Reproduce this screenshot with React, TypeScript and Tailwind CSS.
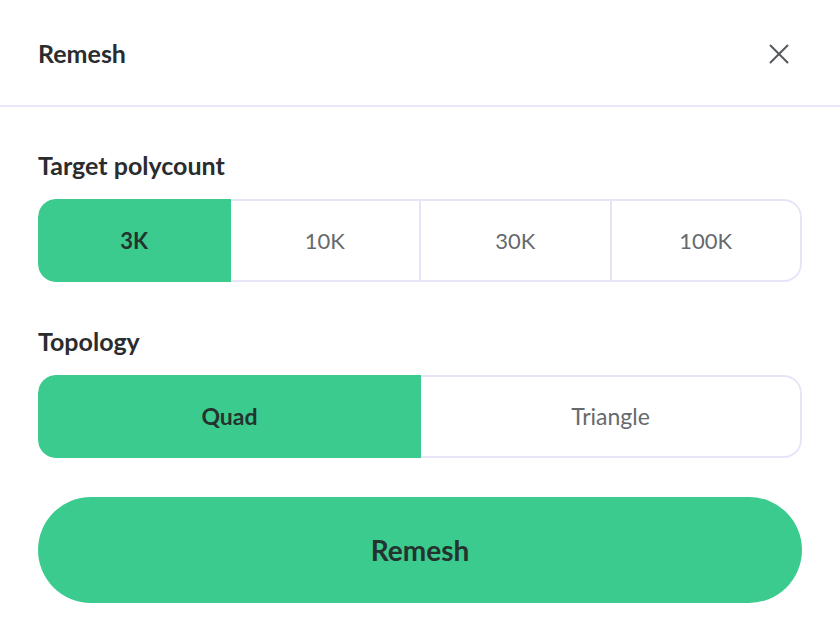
import { X } from 'lucide-react';

const polycounts = ['3K', '10K', '30K', '100K'];
const topologies = ['Quad', 'Triangle'];

function Segmented({ options, selected, size }: { options: string[]; selected: string; size: string }) {
  return (
    <div className="flex h-[83px] rounded-[18px] overflow-hidden">
      {options.map((o, i) => (
        <button
          key={o}
          className={
            'flex-1 flex items-center justify-center border-y-2 border-r-2 ' +
            size +
            (i === 0 ? ' border-l-2 rounded-l-[18px]' : '') +
            (i === options.length - 1 ? ' rounded-r-[18px]' : '') +
            (o === selected
              ? ' bg-[#3ccb8e] border-[#3ccb8e] text-[#24332e] font-bold'
              : ' bg-white border-[#e6e4f6] text-[#666a6c] font-normal')
          }
        >
          {o}
        </button>
      ))}
    </div>
  );
}

export default function App() {
  return (
    <div className="w-[840px] h-[634px] bg-white overflow-hidden rounded-[28px]" style={{ fontFamily: 'Lato, "Noto Sans", sans-serif' }}>
      <div className="h-[107px] flex items-center justify-between pl-[38px] pr-[44px] border-b-2 border-[#e8e6f8]">
        <h1 className="text-[25px] font-bold text-[#2a2c2e] leading-[30px]">Remesh</h1>
        <X size={34} strokeWidth={1.4} className="text-[#555a5e] mt-[2px]" />
      </div>
      <div className="px-[38px] pt-[43px]">
        <h2 className="text-[25px] font-bold text-[#2a2c2e] leading-[30px] mb-[19px]">Target polycount</h2>
        <Segmented options={polycounts} selected="3K" size="text-[22px]" />
        <h2 className="text-[25px] font-bold text-[#2a2c2e] leading-[30px] mt-[44px] mb-[19px]">Topology</h2>
        <Segmented options={topologies} selected="Quad" size="text-[23px]" />
        <button className="mt-[39px] w-full h-[106px] rounded-full bg-[#3ccb8e] text-[#24332e] text-[28px] font-bold">
          Remesh
        </button>
      </div>
    </div>
  );
}
